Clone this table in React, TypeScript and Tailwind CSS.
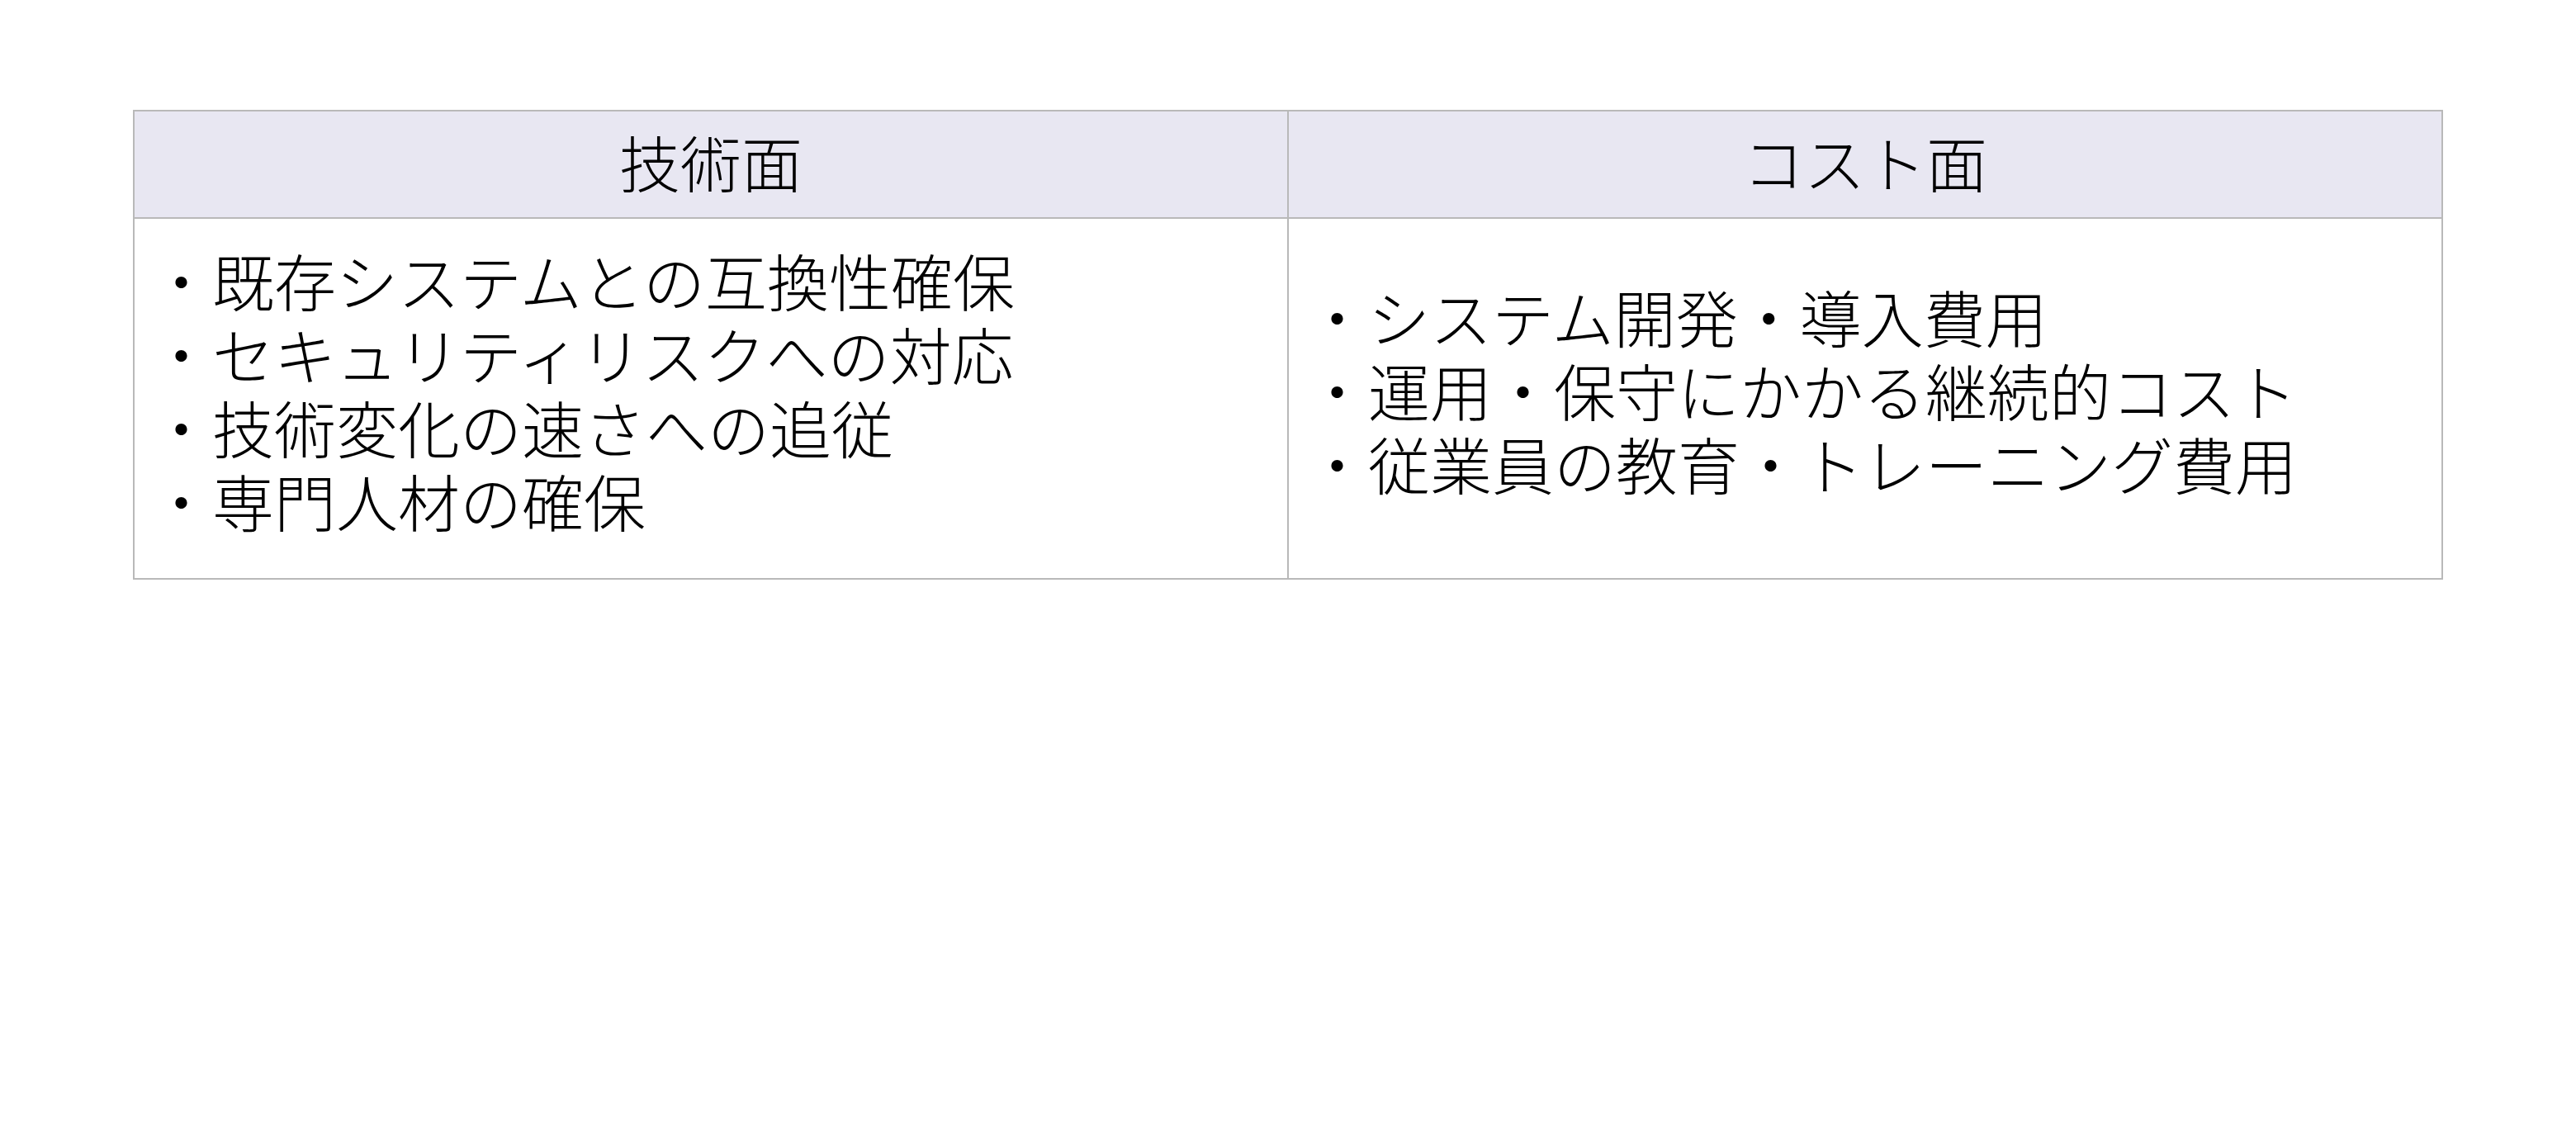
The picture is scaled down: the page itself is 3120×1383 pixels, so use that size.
import React from 'react';

const TECH_ITEMS = [
    '既存システムとの互換性確保',
    'セキュリティリスクへの対応',
    '技術変化の速さへの追従',
    '専門人材の確保',
];

const COST_ITEMS = [
    'システム開発・導入費用',
    '運用・保守にかかる継続的コスト',
    '従業員の教育・トレーニング費用',
];

const font = { fontFamily: '"Noto Sans CJK JP", "Noto Sans", sans-serif' };

const App: React.FC = () => {
    return (
        <div className="w-[3120px] h-[1383px] bg-white pt-[133px] px-[161px]" style={font}>
            <table className="w-full border-collapse table-fixed text-black">
                <thead>
                    <tr className="bg-[#e8e7f2] h-[130px]">
                        <th className="border-2 border-[#b9b9b9] pb-[8px] text-[74px] font-light leading-[90px] text-center align-middle">技術面</th>
                        <th className="border-2 border-[#b9b9b9] pb-[8px] text-[74px] font-light leading-[90px] text-center align-middle">コスト面</th>
                    </tr>
                </thead>
                <tbody>
                    <tr className="h-[437px]">
                        <td className="border-2 border-[#b9b9b9] px-[19px] pb-[22px] align-middle text-[75px] font-light leading-[89px]">
                            {TECH_ITEMS.map((item) => (
                                <div key={item}>・{item}</div>
                            ))}
                        </td>
                        <td className="border-2 border-[#b9b9b9] px-[21px] pb-[22px] align-middle text-[75px] font-light leading-[89px]">
                            {COST_ITEMS.map((item) => (
                                <div key={item}>・{item}</div>
                            ))}
                        </td>
                    </tr>
                </tbody>
            </table>
        </div>
    );
};

export default App;
